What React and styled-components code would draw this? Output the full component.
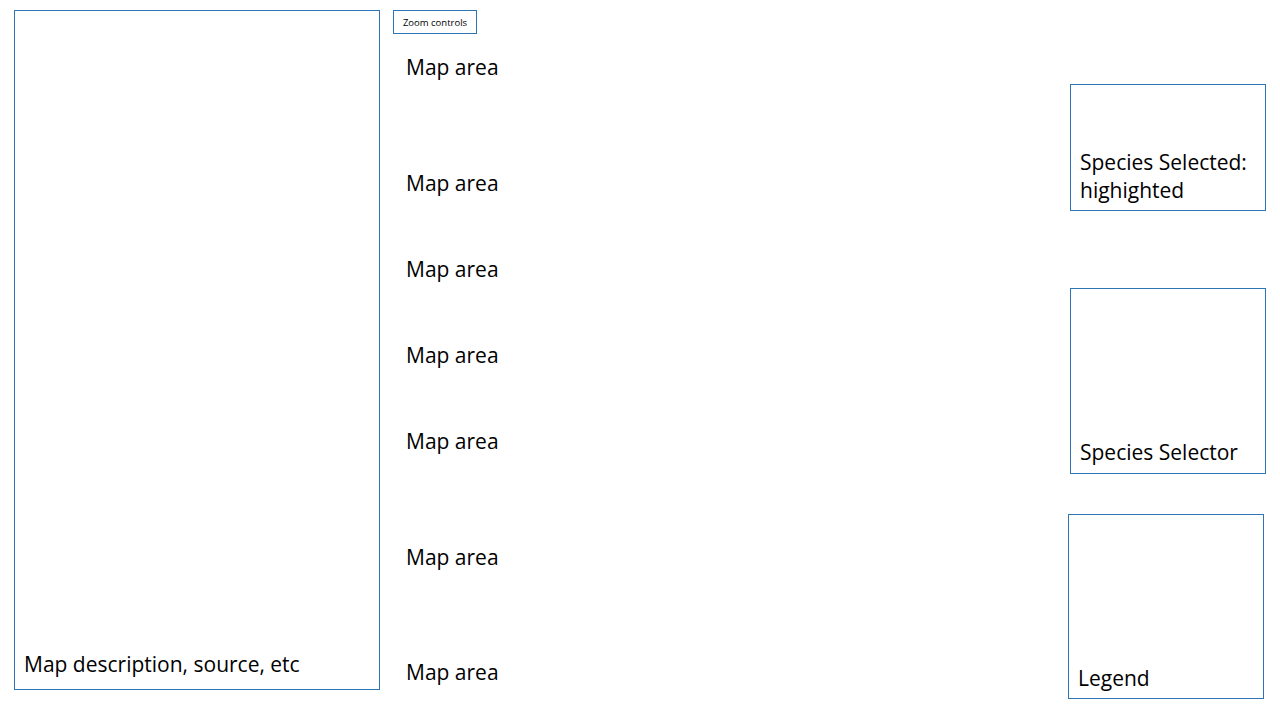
import React from 'react';
import styled, { createGlobalStyle } from 'styled-components';

const GlobalStyle = createGlobalStyle`
  html, body {
    margin: 0;
    padding: 0;
    background: #fff;
  }
  body {
    font-family: 'Open Sans', 'Noto Sans', sans-serif;
    color: #000;
  }
`;

const BORDER = '#2e75b6';

const Page = styled.div`
  display: flex;
  width: 1280px;
  height: 720px;
  box-sizing: border-box;
  padding: 10px 14px 0 14px;
  gap: 13px;
  overflow: hidden;
`;

const DescriptionPanel = styled.aside`
  width: 366px;
  height: 680px;
  flex-shrink: 0;
  box-sizing: border-box;
  border: 1px solid ${BORDER};
  display: flex;
  flex-direction: column;
  justify-content: flex-end;
  padding: 0 0 11px 9px;
`;

const PanelText = styled.div`
  font-size: 21px;
  line-height: 28px;
  white-space: nowrap;
`;

const MapColumn = styled.main`
  flex: 1;
  display: flex;
  flex-direction: column;
  align-items: flex-start;
`;

const ZoomControls = styled.button`
  width: 84px;
  height: 24px;
  flex-shrink: 0;
  box-sizing: border-box;
  border: 1px solid ${BORDER};
  background: #fff;
  font-family: 'Open Sans', 'Noto Sans', sans-serif;
  font-size: 9.5px;
  color: #000;
  padding: 0;
  cursor: pointer;
`;

const MapLabel = styled.div`
  flex-shrink: 0;
  margin-top: ${p => p.$gap}px;
  margin-left: 13px;
  font-size: 21px;
  line-height: 28px;
`;

const SideColumn = styled.div`
  width: 196px;
  flex-shrink: 0;
  display: flex;
  flex-direction: column;
`;

const SideBox = styled.section`
  width: 196px;
  height: ${p => p.$height}px;
  flex-shrink: 0;
  margin-top: ${p => p.$top}px;
  margin-left: ${p => p.$shift || 0}px;
  box-sizing: border-box;
  border: 1px solid ${BORDER};
  display: flex;
  flex-direction: column;
  justify-content: flex-end;
  padding: 0 0 ${p => p.$pad}px 9px;
`;

// space above each "Map area" label
const mapGaps = [19, 88, 58, 58, 58, 88, 87];

const sideBoxes = [
  { lines: ['Species Selected:', 'highighted'], top: 74, height: 127, pad: 6 },
  { lines: ['Species Selector'], top: 77, height: 186, pad: 7 },
  { lines: ['Legend'], top: 40, height: 185, pad: 6, shift: -2 }
];

const App = () => (
  <>
    <GlobalStyle />
    <Page>
      <DescriptionPanel>
        <PanelText>Map description, source, etc</PanelText>
      </DescriptionPanel>
      <MapColumn>
        <ZoomControls>Zoom controls</ZoomControls>
        {mapGaps.map((gap, i) => (
          <MapLabel key={i} $gap={gap}>Map area</MapLabel>
        ))}
      </MapColumn>
      <SideColumn>
        {sideBoxes.map(box => (
          <SideBox
            key={box.lines[0]}
            $top={box.top}
            $height={box.height}
            $pad={box.pad}
            $shift={box.shift}
          >
            {box.lines.map(line => (
              <PanelText key={line}>{line}</PanelText>
            ))}
          </SideBox>
        ))}
      </SideColumn>
    </Page>
  </>
);

export default App;
